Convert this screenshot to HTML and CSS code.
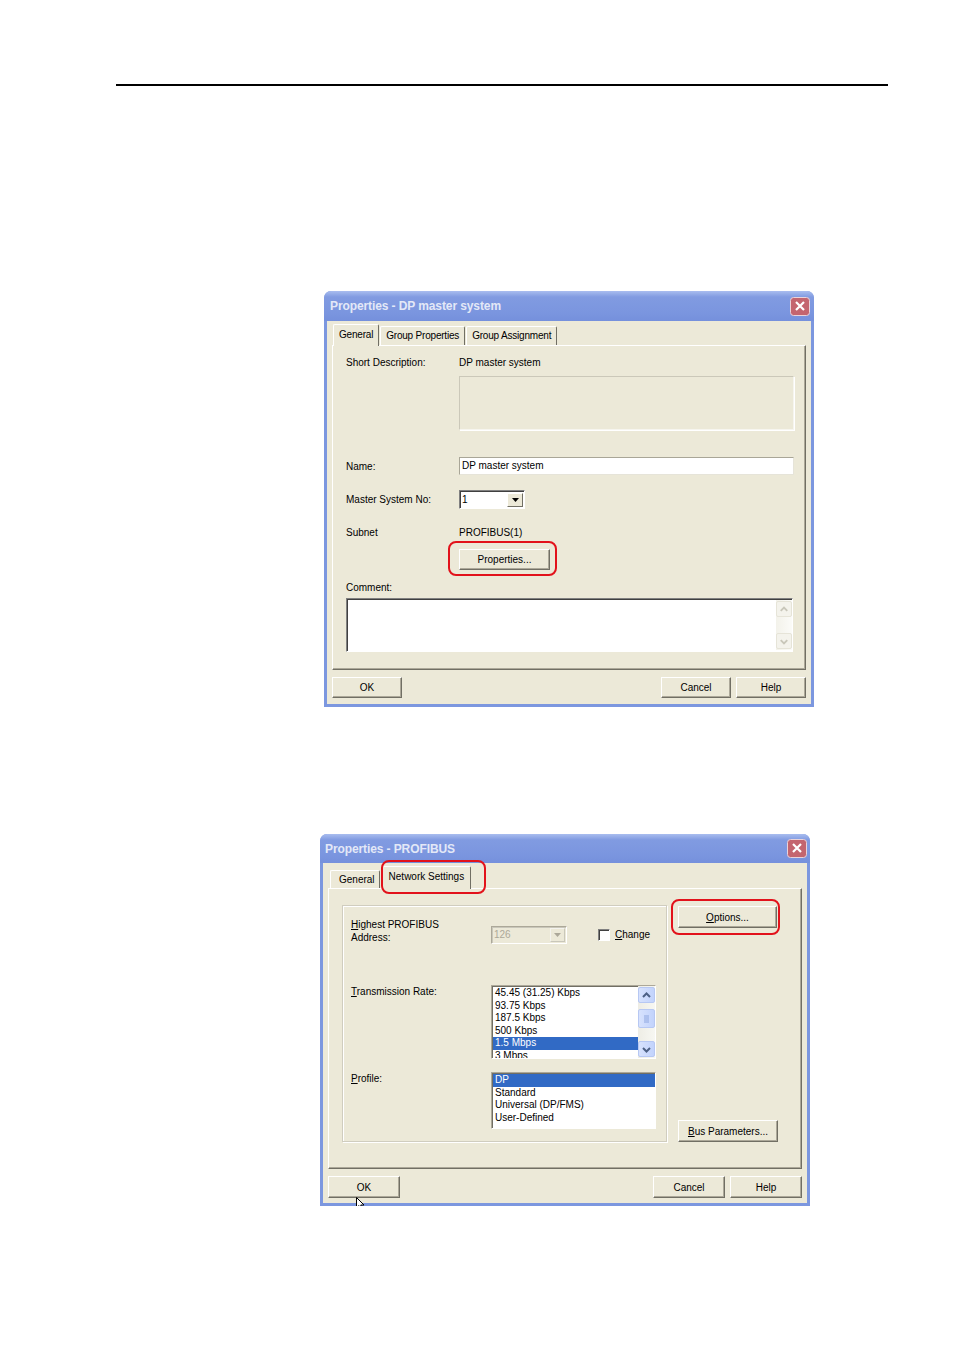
FILE: index.html
```html
<!DOCTYPE html>
<html lang="en">
<head>
  <meta charset="UTF-8" />
  <title>Properties - DP master system / PROFIBUS</title>
  <link rel="stylesheet" href="styles.css">
</head>
<body>
  <div class="rule"></div>

  <!-- first dialog: DP master system -->
  <div class="window win-dp">
    <div class="titlebar">
      <span class="title">Properties - DP master system</span>
      <span class="close">
        <svg width="20" height="19" viewBox="0 0 20 19"><rect x="0.5" y="0.5" width="19" height="18" rx="3" fill="#c4656f" stroke="#e9d3da"/><path d="M6 5 L14 13 M14 5 L6 13" stroke="#fff" stroke-width="2.2"/></svg>
      </span>
    </div>
    <div class="client">
      <div class="tabs tabs-dp">
        <span class="tab active">General</span>
        <span class="tab">Group Properties</span>
        <span class="tab">Group Assignment</span>
      </div>
      <div class="panel panel-dp">
        <div class="row">
          <span class="lbl">Short Description:</span>
          <div class="val">
            <div class="line">DP master system</div>
            <div class="descbox"></div>
          </div>
        </div>
        <div class="row row-name">
          <span class="lbl">Name:</span>
          <div class="edit">DP master system</div>
        </div>
        <div class="row row-mst">
          <span class="lbl">Master System No:</span>
          <div class="select">
            <span class="select-text">1</span>
            <span class="drop"><svg width="7" height="4" viewBox="0 0 7 4"><path d="M0 0h7l-3.5 4z" fill="#000"/></svg></span>
          </div>
        </div>
        <div class="row row-sub">
          <span class="lbl">Subnet</span>
          <span class="line">PROFIBUS(1)</span>
        </div>
        <div class="row-btn">
          <span class="mark mark-prop"><button class="btn btn-prop">Properties...</button></span>
        </div>
        <div class="comment-lbl">Comment:</div>
        <div class="comment">
          <div class="vscroll off">
            <span class="sbtn"><svg width="15" height="15" viewBox="0 0 15 15"><path d="M4 9 L7.5 5.5 L11 9" stroke="#c9c7ba" stroke-width="2" fill="none"/></svg></span>
            <span class="sbtn"><svg width="15" height="15" viewBox="0 0 15 15"><path d="M4 6 L7.5 9.5 L11 6" stroke="#c9c7ba" stroke-width="2" fill="none"/></svg></span>
          </div>
        </div>
      </div>
      <div class="footer">
        <button class="btn ok">OK</button>
        <button class="btn">Cancel</button>
        <button class="btn">Help</button>
      </div>
    </div>
  </div>

  <!-- second dialog: PROFIBUS -->
  <div class="window win-pb">
    <div class="titlebar">
      <span class="title">Properties - PROFIBUS</span>
      <span class="close">
        <svg width="20" height="19" viewBox="0 0 20 19"><rect x="0.5" y="0.5" width="19" height="18" rx="3" fill="#c4656f" stroke="#e9d3da"/><path d="M6 5 L14 13 M14 5 L6 13" stroke="#fff" stroke-width="2.2"/></svg>
      </span>
    </div>
    <div class="client">
      <div class="tabs tabs-pb">
        <span class="tab tab-gen">General</span>
        <span class="tab active mark mark-tab">Network Settings</span>
      </div>
      <div class="panel panel-pb">
        <div class="group">
          <div class="grow">
            <span class="glbl"><u>H</u>ighest PROFIBUS<br>Address:</span>
            <div class="combo">
              <span class="combo-text">126</span>
              <span class="drop"><svg width="7" height="4" viewBox="0 0 7 4"><path d="M0 0h7l-3.5 4z" fill="#aca899"/></svg></span>
            </div>
            <label class="check"><span class="box"></span><span><u>C</u>hange</span></label>
          </div>
          <div class="grow grow-rate">
            <span class="glbl"><u>T</u>ransmission Rate:</span>
            <div class="list list-rate">
              <div class="items">
                <div class="item">45.45 (31.25) Kbps</div>
                <div class="item">93.75 Kbps</div>
                <div class="item">187.5 Kbps</div>
                <div class="item">500 Kbps</div>
                <div class="item sel">1.5 Mbps</div>
                <div class="item">3 Mbps</div>
              </div>
              <div class="vscroll">
                <span class="sbtn"><svg width="15" height="15" viewBox="0 0 15 15"><path d="M4 9 L7.5 5.5 L11 9" stroke="#4d6185" stroke-width="2" fill="none"/></svg></span>
                <span class="sbtn thumb"><svg width="15" height="17" viewBox="0 0 15 17"><path d="M5 6h5M5 8h5M5 10h5M5 12h5" stroke="#8ea6df" stroke-width="1"/></svg></span>
                <span class="sbtn down"><svg width="15" height="15" viewBox="0 0 15 15"><path d="M4 6 L7.5 9.5 L11 6" stroke="#4d6185" stroke-width="2" fill="none"/></svg></span>
              </div>
            </div>
          </div>
          <div class="grow grow-prof">
            <span class="glbl"><u>P</u>rofile:</span>
            <div class="list list-prof">
              <div class="items">
                <div class="item sel">DP</div>
                <div class="item">Standard</div>
                <div class="item">Universal (DP/FMS)</div>
                <div class="item">User-Defined</div>
              </div>
            </div>
          </div>
        </div>
        <div class="side">
          <span class="mark mark-opt"><button class="btn btn-opt"><u>O</u>ptions...</button></span>
          <button class="btn btn-bus"><u>B</u>us Parameters...</button>
        </div>
      </div>
      <div class="footer footer-pb">
        <button class="btn ok">OK
          <svg class="cursor" width="10" height="14" viewBox="0 0 10 14"><path d="M0.5 0.5 L0.5 11 L3 8.6 L5 13 L6.6 12.3 L4.7 8 L8 8 Z" fill="#fff" stroke="#000"/></svg>
        </button>
        <button class="btn">Cancel</button>
        <button class="btn">Help</button>
      </div>
    </div>
  </div>
</body>
</html>
```

FILE: styles.css
```css
body {
  margin: 0;
  background: #fff;
  font-family: "Liberation Sans", Arial, sans-serif;
  font-size: 10px;
  color: #000;
}

.rule {
  margin: 84px 0 0 116px;
  width: 772px;
  border-top: 2px solid #000;
}

/* window frame */
.window {
  box-sizing: border-box;
  width: 490px;
  background: #7c97df;
  padding: 0 3px 3px;
  border-radius: 7px 7px 0 0;
}

.win-dp {
  margin: 205px 0 0 324px;
}

.win-pb {
  margin: 127px 0 0 320px;
}

.titlebar {
  height: 30px;
  margin: 0 -3px;
  padding: 0 4px 0 6px;
  display: flex;
  align-items: center;
  justify-content: space-between;
  background: linear-gradient(#a9bdef, #819be1 20%, #7a95df 75%, #7590dc);
  border-radius: 7px 7px 0 0;
}

.win-pb .titlebar {
  height: 29px;
  padding: 0 3px 0 5px;
}

.title {
  color: #e3e8f7;
  font-weight: bold;
  font-size: 12px;
  letter-spacing: -0.1px;
}

.close {
  display: flex;
}

.client {
  background: #ece9d8;
  padding: 4px 5px 6px;
}

.win-pb .client {
  padding: 3px 5px 5px;
}

/* tabs */
.tabs {
  display: flex;
  align-items: flex-end;
  height: 20px;
  position: relative;
  z-index: 1;
}

.tabs-dp {
  padding-left: 1px;
}

.tabs-pb {
  height: 22px;
  padding-left: 2px;
  gap: 2px;
}

.tab {
  box-sizing: border-box;
  height: 19px;
  line-height: 18px;
  padding: 0 5px;
  letter-spacing: -0.2px;
  background: #ece9d8;
  border-top: 1px solid #fff;
  border-left: 1px solid #fff;
  border-right: 1px solid #716f64;
  border-radius: 2px 2px 0 0;
  white-space: nowrap;
}

.tab + .tab {
  margin-left: 1px;
}

.tabs-pb .tab + .tab {
  margin-left: 0;
}

.tab.active {
  height: 22px;
  margin-bottom: -1px;
  line-height: 19px;
  padding: 0 5px;
}

.tab-gen {
  height: 18px;
  padding: 0 4px 0 8px;
  line-height: 18px;
  letter-spacing: 0;
}

.tabs-pb .tab.active {
  height: 23px;
  padding: 0 6px;
  line-height: 20px;
  letter-spacing: 0;
}

/* tab page */
.panel {
  box-sizing: border-box;
  border: 1px solid;
  border-color: #fff #716f64 #716f64 #fff;
  box-shadow: inset -1px -1px #aca899;
}

.panel-dp {
  height: 325px;
  padding: 10px 11px 0 13px;
}

.row {
  display: flex;
}

.lbl {
  width: 113px;
  flex: none;
  line-height: 13px;
}

.line {
  line-height: 13px;
}

.descbox {
  box-sizing: border-box;
  width: 335px;
  height: 54px;
  margin-top: 7px;
  border: 1px solid;
  border-color: #cbc8b9 #f6f5ef #f6f5ef #cbc8b9;
  box-shadow: 1px 1px #fff;
}

.row-name {
  margin-top: 27px;
  align-items: center;
}

.edit {
  box-sizing: border-box;
  width: 335px;
  height: 18px;
  line-height: 16px;
  padding-left: 2px;
  background: #fff;
  border: 1px solid;
  border-color: #a9a697 #e6e4d9 #e6e4d9 #a9a697;
}

.row-mst {
  margin-top: 15px;
  align-items: center;
}

.select {
  box-sizing: border-box;
  width: 66px;
  height: 19px;
  display: flex;
  background: #fff;
  border: 1px solid;
  border-color: #808080 #fff #fff #808080;
  box-shadow: inset 1px 1px #404040;
  padding: 2px 1px 1px 2px;
}

.select-text {
  flex: 1;
  line-height: 13px;
}

.drop {
  box-sizing: border-box;
  width: 16px;
  display: flex;
  align-items: center;
  justify-content: center;
  background: #ece9d8;
  border: 1px solid;
  border-color: #fff #716f64 #716f64 #fff;
}

.row-sub {
  margin-top: 17px;
}

.row-btn {
  margin-top: 10px;
  padding-left: 113px;
  display: flex;
}

.comment-lbl {
  margin-top: 11px;
  line-height: 13px;
}

.comment {
  box-sizing: border-box;
  width: 447px;
  height: 54px;
  margin-top: 4px;
  background: #fff;
  border: 1px solid;
  border-color: #808080 #fff #fff #808080;
  box-shadow: inset 1px 1px #404040;
  display: flex;
  justify-content: flex-end;
  padding: 1px 0 1px;
}

/* buttons */
.btn {
  box-sizing: border-box;
  width: 70px;
  height: 21px;
  padding: 0;
  font: inherit;
  color: #000;
  text-align: center;
  background: #ece9d8;
  border: 1px solid;
  border-color: #fff #716f64 #716f64 #fff;
  box-shadow: inset -1px -1px #aca899;
  position: relative;
}

.btn-prop {
  width: 91px;
}

.footer {
  display: flex;
  gap: 5px;
  margin-top: 7px;
}

.footer .ok {
  margin-right: auto;
}

.footer-pb .btn {
  width: 72px;
  height: 22px;
}

.cursor {
  position: absolute;
  left: 27px;
  top: 20px;
}

/* red annotation rings */
.mark {
  position: relative;
  display: inline-flex;
}

.mark::after {
  content: "";
  position: absolute;
  border: 2px solid #e2121b;
  border-radius: 8px;
  pointer-events: none;
}

.mark-prop::after {
  top: -8px;
  right: -7px;
  bottom: -6px;
  left: -11px;
}

.mark-tab {
  position: relative;
}

.mark-tab::after {
  top: -7px;
  right: -16px;
  bottom: -5px;
  left: -2px;
}

.mark-opt::after {
  top: -7px;
  right: -3px;
  bottom: -7px;
  left: -7px;
}

/* PROFIBUS page */
.panel-pb {
  height: 281px;
  padding: 16px 0 0 13px;
  display: flex;
  gap: 11px;
}

.group {
  box-sizing: border-box;
  width: 325px;
  height: 237px;
  border: 1px solid #d0cdbf;
  box-shadow: 1px 1px #fff, inset 1px 1px #fff;
  padding: 12px 0 0 8px;
}

.grow {
  display: flex;
  align-items: flex-start;
}

.glbl {
  width: 140px;
  flex: none;
  line-height: 13px;
}

.combo {
  box-sizing: border-box;
  width: 76px;
  height: 18px;
  margin-top: 8px;
  display: flex;
  border: 1px solid;
  border-color: #aca899 #fff #fff #aca899;
  box-shadow: inset 1px 1px #c9c7ba;
  padding: 1px 1px 1px 2px;
}

.combo-text {
  flex: 1;
  line-height: 14px;
  color: #aca899;
}

.combo .drop {
  width: 15px;
  border-color: #f4f3ee #c9c7ba #c9c7ba #f4f3ee;
}

.check {
  display: flex;
  align-items: center;
  gap: 5px;
  margin: 11px 0 0 31px;
  height: 12px;
  line-height: 12px;
}

.box {
  box-sizing: border-box;
  width: 12px;
  height: 12px;
  background: #fff;
  border: 1px solid;
  border-color: #808080 #fff #fff #808080;
  box-shadow: inset 1px 1px #404040;
}

.grow-rate {
  margin-top: 41px;
}

.grow-prof {
  margin-top: 13px;
}

.list {
  box-sizing: border-box;
  width: 165px;
  display: flex;
  background: #fff;
  border: 1px solid;
  border-color: #aca899 #fff #fff #aca899;
  box-shadow: inset 1px 1px #716f64;
}

.list-rate {
  height: 74px;
}

.list-prof {
  height: 57px;
}

.items {
  flex: 1;
  overflow: hidden;
  padding: 1px 0 0 1px;
}

.item {
  line-height: 12.5px;
  padding-left: 2px;
  white-space: nowrap;
}

.item.sel {
  background: #316ac5;
  color: #fff;
}

/* scrollbars */
.vscroll {
  box-sizing: border-box;
  width: 17px;
  display: flex;
  flex-direction: column;
  background: linear-gradient(90deg, #eeede5, #f7f7f2);
  padding: 1px 0 1px;
}

.sbtn {
  box-sizing: border-box;
  width: 17px;
  height: 16px;
  display: flex;
  align-items: center;
  justify-content: center;
  border: 1px solid #b7c8f3;
  border-radius: 2px;
  background: linear-gradient(90deg, #d7e2fd, #c2d3fc);
}

.thumb {
  height: 19px;
  margin-top: 6px;
}

.down {
  margin-top: auto;
}

.vscroll.off {
  width: 16px;
  justify-content: space-between;
  padding-right: 1px;
  background: linear-gradient(90deg, #f3f2ea, #fbfbf8);
}

.vscroll.off .sbtn {
  width: 16px;
  border-color: #e6e4d8;
  background: #f4f3ec;
}

.side {
  height: 237px;
  display: flex;
  flex-direction: column;
  justify-content: space-between;
  align-items: flex-start;
  padding-top: 1px;
  box-sizing: border-box;
}

.btn-opt {
  width: 99px;
  height: 22px;
}

.btn-bus {
  width: 100px;
  height: 22px;
}
```
